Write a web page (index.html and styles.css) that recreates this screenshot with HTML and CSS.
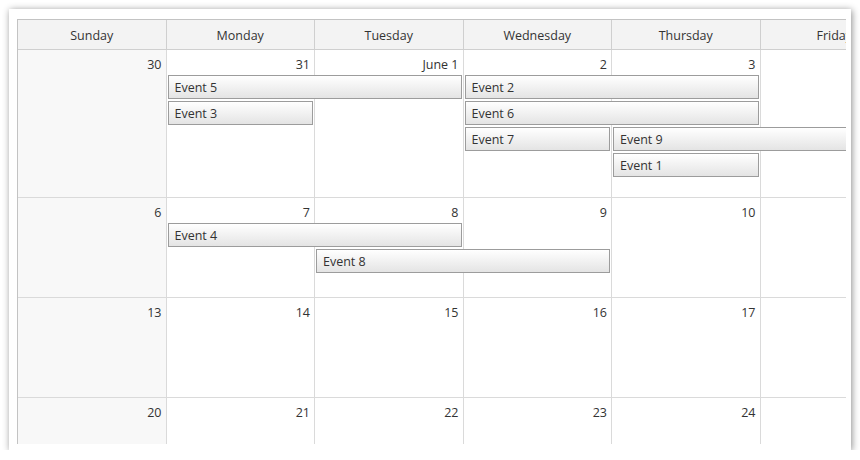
FILE: index.html
```html
<!DOCTYPE html>
<html lang="en">
<head>
    <meta charset="UTF-8">
    <title>Month Calendar</title>
    <link rel="stylesheet" href="styles.css">
</head>
<body>
    <div class="panel">
        <div class="viewport">
            <div class="calendar">
                <!-- Day names -->
                <div class="header">
                    <div class="hcell">Sunday</div>
                    <div class="hcell">Monday</div>
                    <div class="hcell">Tuesday</div>
                    <div class="hcell">Wednesday</div>
                    <div class="hcell">Thursday</div>
                    <div class="hcell">Friday</div>
                    <div class="hcell">Saturday</div>
                </div>

                <!-- Week 1 -->
                <div class="week lines-4">
                    <div class="day weekend"><span class="num">30</span></div>
                    <div class="day"><span class="num">31</span></div>
                    <div class="day"><span class="num">June 1</span></div>
                    <div class="day"><span class="num">2</span></div>
                    <div class="day"><span class="num">3</span></div>
                    <div class="day"><span class="num">4</span></div>
                    <div class="day weekend"><span class="num">5</span></div>
                    <div class="event col-2 span-2 line-1">Event 5</div>
                    <div class="event col-2 span-1 line-2">Event 3</div>
                    <div class="event col-4 span-2 line-1">Event 2</div>
                    <div class="event col-4 span-2 line-2">Event 6</div>
                    <div class="event col-4 span-1 line-3">Event 7</div>
                    <div class="event col-5 span-2 line-3">Event 9</div>
                    <div class="event col-5 span-1 line-4">Event 1</div>
                </div>

                <!-- Week 2 -->
                <div class="week lines-2">
                    <div class="day weekend"><span class="num">6</span></div>
                    <div class="day"><span class="num">7</span></div>
                    <div class="day"><span class="num">8</span></div>
                    <div class="day"><span class="num">9</span></div>
                    <div class="day"><span class="num">10</span></div>
                    <div class="day"><span class="num">11</span></div>
                    <div class="day weekend"><span class="num">12</span></div>
                    <div class="event col-2 span-2 line-1">Event 4</div>
                    <div class="event col-3 span-2 line-2">Event 8</div>
                </div>

                <!-- Week 3 -->
                <div class="week">
                    <div class="day weekend"><span class="num">13</span></div>
                    <div class="day"><span class="num">14</span></div>
                    <div class="day"><span class="num">15</span></div>
                    <div class="day"><span class="num">16</span></div>
                    <div class="day"><span class="num">17</span></div>
                    <div class="day"><span class="num">18</span></div>
                    <div class="day weekend"><span class="num">19</span></div>
                </div>

                <!-- Week 4 -->
                <div class="week">
                    <div class="day weekend"><span class="num">20</span></div>
                    <div class="day"><span class="num">21</span></div>
                    <div class="day"><span class="num">22</span></div>
                    <div class="day"><span class="num">23</span></div>
                    <div class="day"><span class="num">24</span></div>
                    <div class="day"><span class="num">25</span></div>
                    <div class="day weekend"><span class="num">26</span></div>
                </div>
            </div>
        </div>
    </div>
</body>
</html>
```

FILE: styles.css
```css
/* ------ Palette ------ */
:root {
    --clr-text: #333;
    --clr-outer: #c3c3c3;
    --clr-line: #dadada;
    --clr-head: #f3f3f3;
    --clr-weekend: #f8f8f8;
    --clr-event-border: #9c9c9c;
    --col: 148.5px;
}
*,*::before,*::after{box-sizing:border-box;margin:0;padding:0;}
body{
    background:#fff;
    font-family:'Open Sans','Noto Sans',sans-serif;
    font-size:12.5px;
    color:var(--clr-text);
}

/* -------- Frame -------- */
.panel{
    margin:9px 0 0 9px;
    width:842px;
    height:441px;
    padding:10px 5px 6px 8px;
    background:#fff;
    box-shadow:1px 1px 7px rgba(0,0,0,0.45);
}
.viewport{width:100%;height:100%;overflow:hidden;}
.calendar{
    width:1041px;
    border-left:1px solid var(--clr-outer);
    border-top:1px solid var(--clr-outer);
}

/* -------- Header -------- */
.header{
    display:grid;
    grid-template-columns:repeat(7,var(--col));
    background:var(--clr-head);
    border-bottom:1px solid #cfcfcf;
}
.hcell{
    height:29px;
    padding-top:1px;
    line-height:29px;
    text-align:center;
    border-right:1px solid #cfcfcf;
}

/* -------- Weeks -------- */
.week{
    display:grid;
    grid-template-columns:repeat(7,var(--col));
    grid-template-rows:25px 1fr;
    height:100px;
    border-bottom:1px solid var(--clr-line);
}
.week.lines-2{grid-template-rows:25px repeat(2,26px) 1fr;}
.week.lines-4{grid-template-rows:25px repeat(4,26px) 1fr;height:148px;}

.day{grid-row:1 / -1;border-right:1px solid var(--clr-line);background:#fff;}
.day.weekend{background:var(--clr-weekend);}
.day:nth-child(1){grid-column:1;}
.day:nth-child(2){grid-column:2;}
.day:nth-child(3){grid-column:3;}
.day:nth-child(4){grid-column:4;}
.day:nth-child(5){grid-column:5;}
.day:nth-child(6){grid-column:6;}
.day:nth-child(7){grid-column:7;}
.num{display:block;text-align:right;padding:6px 4px 0 0;line-height:18px;}

/* -------- Events -------- */
.event{
    align-self:start;
    height:24px;
    margin:0 2px 0 1px;
    padding:1px 0 0 6px;
    line-height:22px;
    white-space:nowrap;
    overflow:hidden;
    border:1px solid var(--clr-event-border);
    background:linear-gradient(to bottom,#ffffff,#e4e4e4);
}
.col-2{grid-column-start:2;}
.col-3{grid-column-start:3;}
.col-4{grid-column-start:4;}
.col-5{grid-column-start:5;}
.span-1{grid-column-end:span 1;}
.span-2{grid-column-end:span 2;}
.line-1{grid-row:2;}
.line-2{grid-row:3;}
.line-3{grid-row:4;}
.line-4{grid-row:5;}
```
